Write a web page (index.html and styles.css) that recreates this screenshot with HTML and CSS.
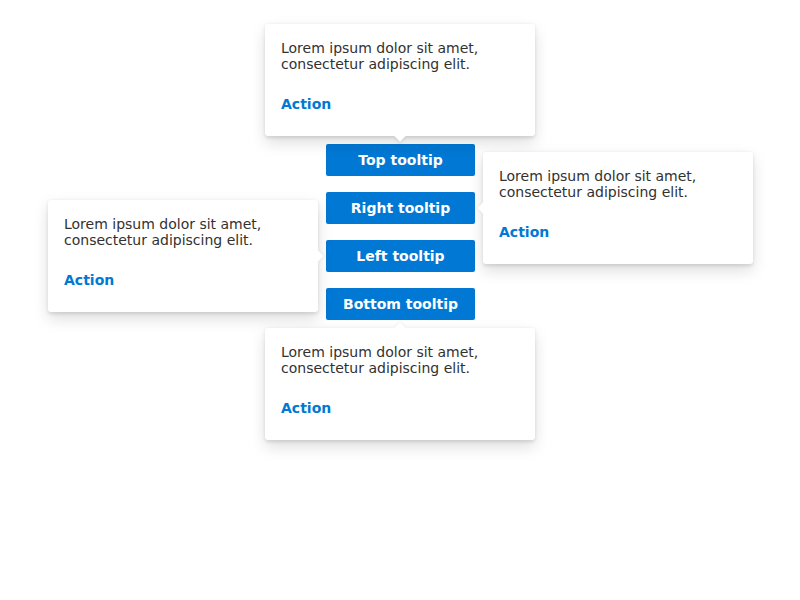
FILE: index.html
```html
<!DOCTYPE html>
<html lang="en">
<head>
<meta charset="utf-8">
<title>Tooltips</title>
<link rel="stylesheet" href="styles.css">
</head>
<body>
<div class="stack">
  <div class="anchor">
    <button class="btn">Top tooltip</button>
    <div class="tip tip-top">
      <p class="tip-text">Lorem ipsum dolor sit amet, consectetur adipiscing elit.</p>
      <div class="tip-actions"><a class="tip-link" href="#">Action</a></div>
    </div>
  </div>
  <div class="anchor">
    <button class="btn">Right tooltip</button>
    <div class="tip tip-right">
      <p class="tip-text">Lorem ipsum dolor sit amet, consectetur adipiscing elit.</p>
      <div class="tip-actions"><a class="tip-link" href="#">Action</a></div>
    </div>
  </div>
  <div class="anchor">
    <button class="btn">Left tooltip</button>
    <div class="tip tip-left">
      <p class="tip-text">Lorem ipsum dolor sit amet, consectetur adipiscing elit.</p>
      <div class="tip-actions"><a class="tip-link" href="#">Action</a></div>
    </div>
  </div>
  <div class="anchor">
    <button class="btn">Bottom tooltip</button>
    <div class="tip tip-bottom">
      <p class="tip-text">Lorem ipsum dolor sit amet, consectetur adipiscing elit.</p>
      <div class="tip-actions"><a class="tip-link" href="#">Action</a></div>
    </div>
  </div>
</div>
</body>
</html>
```
FILE: styles.css
```css
html, body {
  margin: 0;
  padding: 0;
  background: #ffffff;
  font-family: "DejaVu Sans", sans-serif;
}

body {
  min-height: 600px;
}

.stack {
  display: flex;
  flex-direction: column;
  gap: 16px;
  width: 149px;
  margin-left: 326px;
  padding-top: 144px;
  padding-bottom: 140px;
}

.anchor {
  position: relative;
}

.btn {
  display: block;
  width: 149px;
  height: 32px;
  padding: 0 12px;
  border: none;
  border-radius: 2px;
  background: #0078d4;
  color: #ffffff;
  font-family: "DejaVu Sans", sans-serif;
  font-size: 14px;
  font-weight: 700;
  cursor: pointer;
}

.tip {
  position: absolute;
  width: 270px;
  box-sizing: border-box;
  padding: 16px;
  background: #ffffff;
  border-radius: 3px;
  box-shadow: 0 6.4px 14.4px rgba(0, 0, 0, 0.13), 0 1.2px 3.6px rgba(0, 0, 0, 0.11);
  z-index: 2;
}

.tip::before {
  content: "";
  position: absolute;
  width: 8px;
  height: 8px;
  background: #ffffff;
  transform: rotate(45deg);
}

.tip-text {
  margin: 0;
  font-size: 14px;
  line-height: 16px;
  color: #323130;
}

.tip-actions {
  display: flex;
  align-items: center;
  height: 32px;
  margin-top: 16px;
}

.tip-link {
  font-size: 14px;
  font-weight: 700;
  color: #0078d4;
  text-decoration: none;
}

.tip-top {
  bottom: calc(100% + 8px);
  left: -61px;
}
.tip-top::before {
  left: 131px;
  bottom: -4px;
  box-shadow: 2px 2px 3px rgba(0, 0, 0, 0.07);
}

.tip-bottom {
  top: calc(100% + 8px);
  left: -61px;
}
.tip-bottom::before {
  left: 131px;
  top: -4px;
  box-shadow: -1px -1px 2px rgba(0, 0, 0, 0.05);
}

.tip-right {
  left: calc(100% + 8px);
  top: -40px;
}
.tip-right::before {
  left: -4px;
  top: 52px;
  box-shadow: -1px 1px 2px rgba(0, 0, 0, 0.05);
}

.tip-left {
  right: calc(100% + 8px);
  top: -40px;
}
.tip-left::before {
  right: -4px;
  top: 52px;
  box-shadow: 1px -1px 2px rgba(0, 0, 0, 0.05);
}
```
